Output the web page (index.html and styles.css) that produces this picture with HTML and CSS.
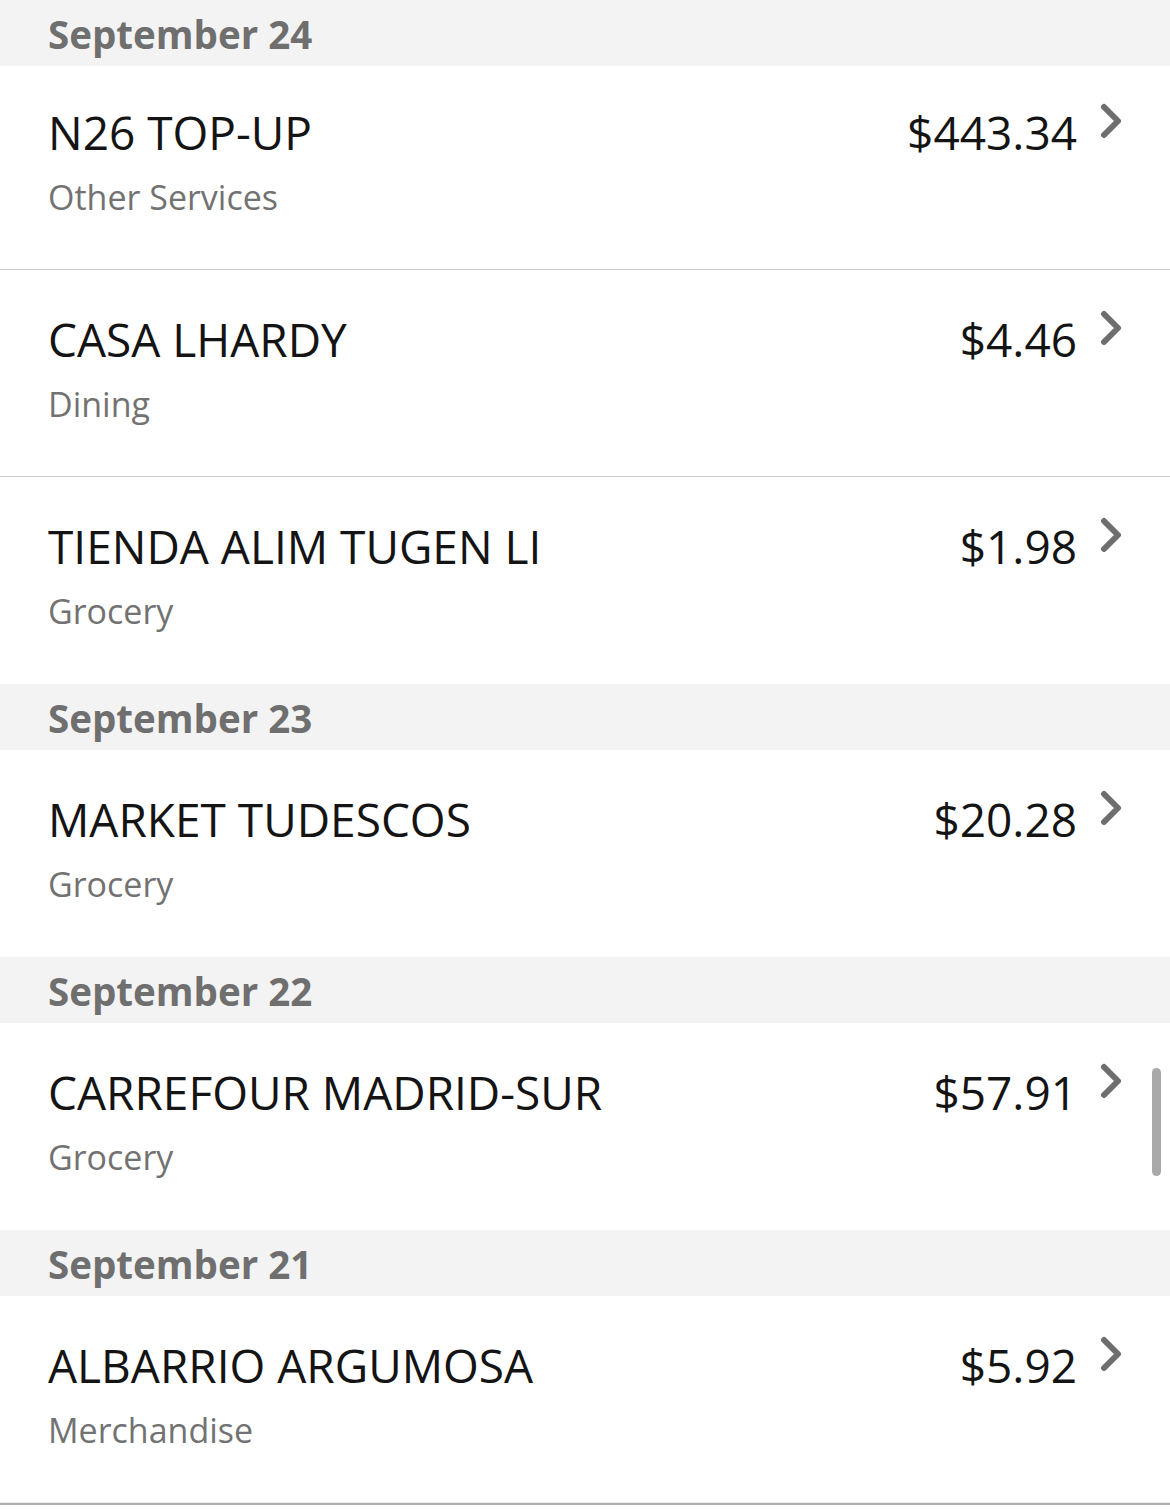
FILE: index.html
```html
<!DOCTYPE html>
<html lang="en">
<head>
<meta charset="utf-8">
<title>Transactions</title>
<link rel="stylesheet" href="styles.css">
</head>
<body>
<div class="page">
  <section class="day">
    <h2 class="day-head">September 24</h2>
    <div class="row row--first">
      <div class="info"><div class="title">N26 TOP-UP</div><div class="cat">Other Services</div></div>
      <div class="side"><div class="amount">$443.34</div><svg class="chev" viewBox="0 0 22 36" width="22" height="36"><polyline points="4,4 18,18 4,32" /></svg></div>
    </div>
    <div class="row">
      <div class="info"><div class="title">CASA LHARDY</div><div class="cat">Dining</div></div>
      <div class="side"><div class="amount">$4.46</div><svg class="chev" viewBox="0 0 22 36" width="22" height="36"><polyline points="4,4 18,18 4,32" /></svg></div>
    </div>
    <div class="row">
      <div class="info"><div class="title">TIENDA ALIM TUGEN LI</div><div class="cat">Grocery</div></div>
      <div class="side"><div class="amount">$1.98</div><svg class="chev" viewBox="0 0 22 36" width="22" height="36"><polyline points="4,4 18,18 4,32" /></svg></div>
    </div>
  </section>
  <section class="day">
    <h2 class="day-head">September 23</h2>
    <div class="row">
      <div class="info"><div class="title">MARKET TUDESCOS</div><div class="cat">Grocery</div></div>
      <div class="side"><div class="amount">$20.28</div><svg class="chev" viewBox="0 0 22 36" width="22" height="36"><polyline points="4,4 18,18 4,32" /></svg></div>
    </div>
  </section>
  <section class="day">
    <h2 class="day-head">September 22</h2>
    <div class="row">
      <div class="info"><div class="title">CARREFOUR MADRID-SUR</div><div class="cat">Grocery</div></div>
      <div class="side"><div class="amount">$57.91</div><svg class="chev" viewBox="0 0 22 36" width="22" height="36"><polyline points="4,4 18,18 4,32" /></svg></div>
    </div>
  </section>
  <section class="day day--last">
    <h2 class="day-head">September 21</h2>
    <div class="row">
      <div class="info"><div class="title">ALBARRIO ARGUMOSA</div><div class="cat">Merchandise</div></div>
      <div class="side"><div class="amount">$5.92</div><svg class="chev" viewBox="0 0 22 36" width="22" height="36"><polyline points="4,4 18,18 4,32" /></svg></div>
    </div>
  </section>
  <div class="list-end"></div>
  <div class="scrollbar"></div>
</div>
</body>
</html>
```

FILE: styles.css
```css
html, body {
  margin: 0;
  padding: 0;
  background: #ffffff;
}

body {
  font-family: "Open Sans", "Noto Sans", sans-serif;
}

.page {
  position: relative;
  width: 1170px;
}

.day-head {
  margin: 0;
  box-sizing: border-box;
  height: 66px;
  padding: 11px 0 0 48px;
  background: #f3f3f3;
  color: #6f6f6f;
  font-size: 38.5px;
  line-height: 46px;
  font-weight: 700;
}

.row {
  box-sizing: border-box;
  height: 207px;
  display: flex;
  justify-content: space-between;
  align-items: flex-start;
  padding: 41px 48px 0 48px;
  border-bottom: 1px solid #cbcbcb;
}

.row:last-child {
  border-bottom-color: transparent;
}

.day--last .row:last-child {
  border-bottom-color: #ededed;
}

.row--first {
  height: 204px;
  padding-top: 38px;
}

.title {
  font-size: 46px;
  line-height: 56px;
  color: #141414;
}

.cat {
  margin-top: 17px;
  font-size: 34px;
  line-height: 40px;
  color: #727272;
}

.side {
  display: flex;
  align-items: flex-start;
  gap: 23px;
}

.amount {
  font-size: 46px;
  line-height: 56px;
  color: #141414;
}

.chev {
  display: block;
  margin-top: -1px;
  fill: none;
  stroke: #6e6e6e;
  stroke-width: 6;
  stroke-linecap: round;
  stroke-linejoin: round;
}

.list-end {
  height: 2px;
  background: #b0b0b0;
}

.scrollbar {
  position: absolute;
  left: 1152px;
  top: 1068px;
  width: 9px;
  height: 108px;
  border-radius: 5px;
  background: #a9a9a9;
}
```
